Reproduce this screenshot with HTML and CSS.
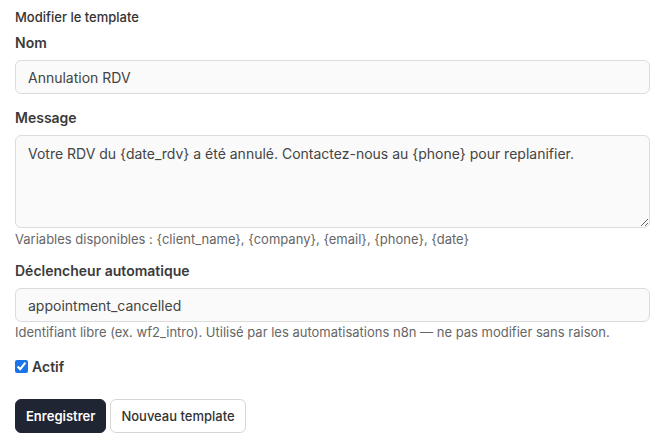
FILE: index.html
```html
<!DOCTYPE html>
<html lang="fr">
<head>
  <meta charset="UTF-8">
  <meta name="viewport" content="width=device-width, initial-scale=1.0">
  <title>Modifier le template</title>
  <link rel="stylesheet" href="styles.css">
</head>
<body>
  <form class="editor">
    <h3 class="editor-title">Modifier le template</h3>

    <div class="field">
      <label for="name">Nom</label>
      <input id="name" class="input" type="text" value="Annulation RDV">
    </div>

    <div class="field">
      <label for="message">Message</label>
      <textarea id="message" class="input textarea">Votre RDV du {date_rdv} a été annulé. Contactez-nous au {phone} pour replanifier.</textarea>
      <p class="help">Variables disponibles : {client_name}, {company}, {email}, {phone}, {date}</p>
    </div>

    <div class="field field-last">
      <label for="trigger">Déclencheur automatique</label>
      <input id="trigger" class="input" type="text" value="appointment_cancelled">
      <p class="help help-tight">Identifiant libre (ex. wf2_intro). Utilisé par les automatisations n8n — ne pas modifier sans raison.</p>
    </div>

    <label class="check">
      <input type="checkbox" checked>
      <span>Actif</span>
    </label>

    <div class="actions">
      <button type="button" class="btn btn-primary">Enregistrer</button>
      <button type="button" class="btn btn-light">Nouveau template</button>
    </div>
  </form>
</body>
</html>
```

FILE: styles.css
```css
body{
  margin: 0;
  background: #fff;
  font-family: Inter, "Noto Sans", sans-serif;
  color: #333;
}

.editor{
  padding: 8px 15px 0;
}

.editor-title{
  margin: 0 0 7px;
  font-size: 13px;
  line-height: 18px;
  font-weight: 500;
  color: #333;
}

.field{
  margin-bottom: 14px;
}
.field-last{
  margin-bottom: 16px;
}

.field > label{
  display: block;
  margin-bottom: 7px;
  font-size: 14px;
  line-height: 20px;
  font-weight: 600;
  color: #3a3a3a;
}

.input{
  display: block;
  box-sizing: border-box;
  width: 100%;
  height: 34px;
  margin: 0;
  padding: 0 12px;
  border: 1px solid #dcdcdc;
  border-radius: 6px;
  background: #fafafa;
  font-family: inherit;
  font-size: 14px;
  color: #444;
  outline: none;
}

.textarea{
  height: 93px;
  padding: 8px 12px;
  line-height: 20px;
  resize: vertical;
}

.help{
  margin: 3px 0 0;
  font-size: 13px;
  line-height: 16px;
  color: #666;
}
.help-tight{
  margin-top: 2px;
}

.check{
  display: flex;
  align-items: center;
  gap: 4px;
  height: 20px;
  font-size: 14px;
  font-weight: 600;
  color: #3a3a3a;
}
.check input{
  width: 13px;
  height: 13px;
  margin: 0;
  accent-color: #1a73e8;
}

.actions{
  display: flex;
  gap: 4px;
  margin-top: 23px;
}

.btn{
  height: 34px;
  padding: 0 10px;
  border-radius: 6px;
  font-family: inherit;
  font-size: 13px;
  cursor: pointer;
}
.btn-primary{
  border: 1px solid #1f2532;
  background: #1f2532;
  color: #fff;
  font-weight: 600;
}
.btn-light{
  border: 1px solid #d6d6d6;
  background: #fff;
  color: #333;
  font-weight: 500;
}
```
